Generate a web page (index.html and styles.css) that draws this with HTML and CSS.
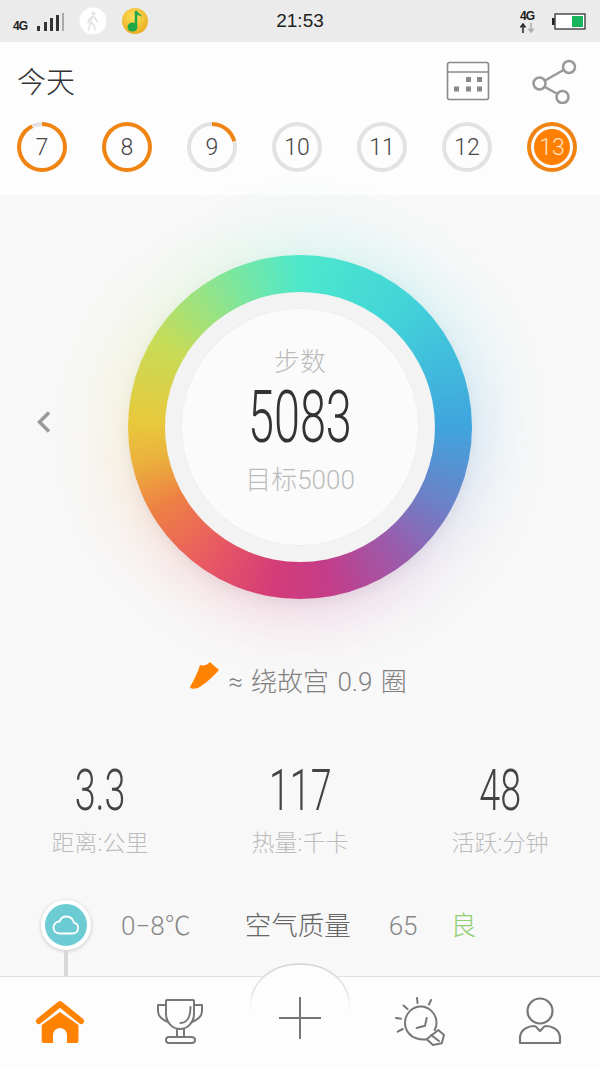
FILE: index.html
```html
<!DOCTYPE html>
<html lang="zh-CN">
<head>
  <meta charset="UTF-8">
  <title>今天</title>
  <link rel="stylesheet" href="styles.css">
</head>
<body>
  <div class="statusbar">
    <div class="status-left">
      <span class="net">4G</span>
      <svg class="signal" width="30" height="20" viewBox="0 0 30 20">
        <rect x="1" y="14" width="3" height="5" fill="#333"/>
        <rect x="8" y="10" width="3" height="9" fill="#333"/>
        <rect x="14" y="6" width="3" height="13" fill="#333"/>
        <rect x="20" y="3" width="3" height="16" fill="#333"/>
        <rect x="26" y="1" width="2" height="18" fill="#aaa"/>
      </svg>
      <svg class="app-walk" width="28" height="28" viewBox="0 0 28 28">
        <circle cx="14" cy="14" r="13.5" fill="#fff"/>
        <circle cx="14.5" cy="6.5" r="2" fill="#e4e4e4"/>
        <path d="M13 10l3 .5 2 4M13 10l-1.500 5 3.500 3 1 5M11.500 15l-2 8M13 10l-3 2.500-1 3" fill="none" stroke="#e4e4e4" stroke-width="1.800" stroke-linecap="round"/>
      </svg>
      <svg class="app-music" width="28" height="28" viewBox="0 0 28 28">
        <defs>
          <radialGradient id="qq" cx="45%" cy="35%" r="70%">
            <stop offset="0" stop-color="#ffe15a"/>
            <stop offset="1" stop-color="#e8a91c"/>
          </radialGradient>
        </defs>
        <circle cx="14" cy="14" r="13" fill="url(#qq)"/>
        <path d="M15 4v15" stroke="#1fa84a" stroke-width="2.500"/>
        <path d="M15 3c1 3 5 3 6 7-2-1.500-4-2-6-1.500z" fill="#1fa84a"/>
        <ellipse cx="11.500" cy="20" rx="5" ry="4.500" fill="#1fa84a"/>
      </svg>
    </div>
    <div class="clock">21:53</div>
    <div class="status-right">
      <div class="net-up">
        <span class="net">4G</span>
        <svg width="16" height="10" viewBox="0 0 16 10">
          <path d="M4 10V3M1.500 4.500L4 1l2.500 3.500" fill="none" stroke="#222" stroke-width="1.500"/>
          <path d="M12 0v7M9.500 5.500L12 9l2.500-3.500" fill="none" stroke="#aaa" stroke-width="1.500"/>
        </svg>
      </div>
      <svg class="battery" width="34" height="17" viewBox="0 0 34 17">
        <rect x="3" y="1" width="30" height="15" fill="#fff" stroke="#222" stroke-width="1.200"/>
        <rect x="0" y="5" width="2.500" height="7" fill="#222"/>
        <rect x="20" y="3" width="11" height="11" fill="#19b35b"/>
      </svg>
    </div>
  </div>

  <header class="top">
    <div class="top-row">
      <h1 class="today">今天</h1>
      <div class="top-icons">
        <svg width="44" height="40" viewBox="0 0 44 40">
          <rect x="1.500" y="1.500" width="41" height="37" rx="2" fill="none" stroke="#888" stroke-width="1.600"/>
          <path d="M1.500 11h41" stroke="#888" stroke-width="1.600"/>
          <g fill="#888">
            <rect x="20" y="16" width="5" height="5"/>
            <rect x="31" y="16" width="5" height="5"/>
            <rect x="8" y="25.500" width="5" height="5"/>
            <rect x="20" y="25.500" width="5" height="5"/>
            <rect x="31" y="25.500" width="5" height="5"/>
          </g>
        </svg>
        <svg width="46" height="46" viewBox="0 0 46 46">
          <g fill="none" stroke="#999" stroke-width="2.500">
            <circle cx="38" cy="9" r="6"/>
            <circle cx="8.500" cy="25.500" r="6"/>
            <circle cx="31.500" cy="39" r="6"/>
            <path d="M14 22.500l18.500-10.500M14 29l12.500 7"/>
          </g>
        </svg>
      </div>
    </div>
    <div class="days">
      <div class="day" style="--p: 93%"><span>7</span></div>
      <div class="day" style="--p: 100%"><span>8</span></div>
      <div class="day" style="--p: 21%"><span>9</span></div>
      <div class="day" style="--p: 0%"><span>10</span></div>
      <div class="day" style="--p: 0%"><span>11</span></div>
      <div class="day" style="--p: 0%"><span>12</span></div>
      <div class="day current" style="--p: 100%"><span>13</span></div>
    </div>
  </header>

  <main class="main">
    <section class="hero">
      <svg class="prev" width="16" height="24" viewBox="0 0 16 24">
        <path d="M13 2.500L3.500 12l9.500 9.500" fill="none" stroke="#999" stroke-width="3.500"/>
      </svg>
      <div class="dial">
        <div class="dial-glow"></div>
        <div class="dial-ring"></div>
        <div class="dial-hole">
          <div class="dial-face">
            <div class="dial-label">步数</div>
            <div class="dial-num"><span>5083</span></div>
            <div class="dial-goal">目标5000</div>
          </div>
        </div>
      </div>
      <div class="route">
        <svg width="32" height="30" viewBox="0 0 32 30">
          <path d="M2 27C6 20 10 12 12 5c3 1 6 1 10-3 3 3 7 6 9 8-5 6-14 14-21 18-4 1-8 1-8-1z" fill="#ff8200"/>
        </svg>
        <span class="route-text">≈ 绕故宫 0.9 圈</span>
      </div>
    </section>

    <section class="stats">
      <div class="stat">
        <div class="stat-num"><span>3.3</span></div>
        <div class="stat-label">距离:公里</div>
      </div>
      <div class="stat">
        <div class="stat-num"><span>117</span></div>
        <div class="stat-label">热量:千卡</div>
      </div>
      <div class="stat">
        <div class="stat-num"><span>48</span></div>
        <div class="stat-label">活跃:分钟</div>
      </div>
    </section>

    <section class="weather">
      <div class="pin">
        <svg width="28" height="20" viewBox="0 0 28 20">
          <path d="M7 18.500h14a5.500 5.500 0 0 0 1-10.800C21 4 18 1.500 14.500 1.500 11 1.500 8.500 3.500 7.500 6.500 4 6.500 1.500 9.200 1.500 12.500S4 18.500 7 18.500z" fill="none" stroke="#fff" stroke-width="1.800"/>
        </svg>
      </div>
      <div class="weather-text">
        <span class="temp">0−8℃</span>
        <span class="air">空气质量</span>
        <span class="aqi">65</span>
        <span class="aqi-level">良</span>
      </div>
    </section>
  </main>

  <nav class="tabs">
    <svg class="hump" width="104" height="46" viewBox="0 0 104 46">
      <defs>
        <linearGradient id="humpline" x1="0" y1="0" x2="0" y2="1">
          <stop offset="0" stop-color="#d4d4d4"/>
          <stop offset="0.6" stop-color="#e2e2e2"/>
          <stop offset="1" stop-color="#fbfbfb"/>
        </linearGradient>
      </defs>
      <path d="M2 46C2 18 24 1 52 1s50 17 50 45z" fill="#fdfdfd"/>
      <path d="M2 46C2 18 24 1 52 1s50 17 50 45" fill="none" stroke="url(#humpline)" stroke-width="1.500"/>
    </svg>
    <div class="tab">
      <svg width="50" height="50" viewBox="0 0 50 50">
        <path d="M4 25L25 8l21 17" fill="none" stroke="#ff8200" stroke-width="6" stroke-linecap="round" stroke-linejoin="round"/>
        <path d="M25 16l18.500 13v16a2 2 0 0 1-2 2H32v-8a7 7 0 0 0-14 0v8H8.700a2 2 0 0 1-2-2V29z" fill="#ff8200"/>
      </svg>
    </div>
    <div class="tab">
      <svg width="50" height="50" viewBox="0 0 50 50">
        <g fill="none" stroke="#777" stroke-width="2" stroke-linejoin="round" stroke-linecap="round">
          <path d="M12 4h26q1 0 1 1v13c0 9-7 15-14 15s-14-6-14-15V5q0-1 1-1z"/>
          <path d="M11 9H3v6c0 5 5 9 10 11M39 9h8v6c0 5-5 9-10 11"/>
          <path d="M35.500 11c0 9-3 16-10 16"/>
          <path d="M22 33v8M29 33v8"/>
          <path d="M14 41h22q4 0 4 3t-3 3H14q-3 0-3-3t3-3z"/>
        </g>
      </svg>
    </div>
    <div class="tab">
      <svg class="plus" width="50" height="50" viewBox="0 0 50 50">
        <path d="M25 4v42M4 25h42" stroke="#777" stroke-width="2"/>
      </svg>
    </div>
    <div class="tab">
      <svg width="50" height="50" viewBox="0 0 50 50">
        <g fill="none" stroke="#777" stroke-width="2" stroke-linejoin="round" stroke-linecap="round">
          <path d="M31.700 43.300C28 44 25 43.500 22 42.500c-7-2-12-8-12-15.800C10 18 17 10.500 25.700 10.500S41.500 18 41.500 26.700c0 3-.8 5.500-1.800 7.300"/>
          <path d="M43.300 34l5.700 5-2.300 8.300-8.700 1.700-6.300-5.700z"/>
          <path d="M36 39l8 6"/>
          <path d="M31.700 22L30 29.700 21.700 32"/>
          <path d="M22 2l.5 5M36 4l-2 4.500M8.500 9.500l4 3.500M1 22l5 .7M2.700 35.700l5-2.700"/>
        </g>
      </svg>
    </div>
    <div class="tab">
      <svg width="50" height="50" viewBox="0 0 50 50">
        <g fill="none" stroke="#777" stroke-width="2.200" stroke-linejoin="round">
          <circle cx="25" cy="15" r="12.500"/>
          <path d="M5 47v-5c0-9 9-12 14-12 3 0 4 4 6 5 2-1 3-5 6-5 5 0 14 3 14 12v5z"/>
        </g>
      </svg>
    </div>
  </nav>
</body>
</html>
```

FILE: styles.css
```css
* {
  box-sizing: border-box;
}

html, body {
  margin: 0;
  padding: 0;
}

body {
  width: 600px;
  height: 1067px;
  overflow: hidden;
  display: flex;
  flex-direction: column;
  background-color: #f8f8f8;
  font-family: Roboto, "Noto Sans CJK SC", sans-serif;
  font-weight: 300;
}

svg {
  display: block;
}

/* status bar */
.statusbar {
  height: 42px;
  background-color: #ebebeb;
  display: grid;
  grid-template-columns: 1fr auto 1fr;
  align-items: center;
  padding: 0 13px;
}

.status-left {
  display: flex;
  align-items: center;
}

.net {
  font-family: "Liberation Sans", sans-serif;
  font-size: 12px;
  font-weight: 700;
  color: #222;
  letter-spacing: -1px;
}

.status-left .net {
  margin-top: 9px;
  width: 18px;
}

.signal {
  margin: 2px 0 0 5px;
}

.app-walk {
  margin-left: 13px;
}

.app-music {
  margin-left: 14px;
}

.clock {
  font-family: "Liberation Sans", sans-serif;
  font-size: 19px;
  color: #222;
}

.status-right {
  display: flex;
  justify-content: flex-end;
  align-items: center;
  padding-right: 1px;
}

.net-up {
  display: flex;
  flex-direction: column;
  align-items: center;
  margin-right: 17px;
  line-height: 13px;
}

/* header with days */
.top {
  height: 153px;
  background-color: #fdfdfd;
  padding: 16px 23px 0 17px;
}

.top-row {
  height: 46px;
  display: flex;
  justify-content: space-between;
  align-items: center;
}

.today {
  margin: 4px 0 0;
  font-size: 29px;
  font-weight: 300;
  color: #333;
  line-height: 46px;
}

.top-icons {
  display: flex;
  align-items: center;
  gap: 41px;
}

.days {
  display: flex;
  justify-content: space-between;
  margin-top: 18px;
}

.day {
  width: 50px;
  height: 50px;
  border-radius: 50%;
  padding: 4px;
  background: conic-gradient(#ef8412 var(--p), #e2e2e2 0);
}

.day span {
  display: flex;
  align-items: center;
  justify-content: center;
  width: 100%;
  height: 100%;
  border-radius: 50%;
  background-color: #fdfdfd;
  color: #444;
  font-size: 23px;
}

.day.current span {
  background-color: #ff8000;
  color: #ffe3c4;
  box-shadow: 0 0 0 3px #fdfdfd inset;
  background-clip: content-box;
  padding: 3px;
}

/* main area */
.main {
  flex: 1;
  background-color: #f8f8f8;
}

.hero {
  position: relative;
  padding-top: 60px;
}

.prev {
  position: absolute;
  left: 36px;
  top: 215px;
}

.dial {
  position: relative;
  width: 344px;
  height: 344px;
  margin: 0 auto;
}

.dial-glow,
.dial-ring {
  position: absolute;
  inset: 0;
  border-radius: 50%;
  background: conic-gradient(#4de8cc 0deg, #42d4d8 40deg, #41bcdc 65deg, #40a4de 90deg, #6a82c8 118deg, #9a5cac 142deg, #c43c88 170deg, #d43c78 190deg, #e85a62 215deg, #ee8044 240deg, #ebb23c 258deg, #e8c93c 272deg, #c6dc58 302deg, #7ee69c 335deg, #4de8cc 360deg);
}

.dial-glow {
  filter: blur(30px);
  opacity: 0.22;
  transform: scale(1.08);
}

.dial-ring {
  box-shadow: 0 5px 12px rgba(120, 120, 140, 0.1);
}

.dial-hole {
  position: absolute;
  inset: 37px;
  border-radius: 50%;
  background-color: #f3f3f3;
  padding: 17px;
}

.dial-face {
  width: 100%;
  height: 100%;
  border-radius: 50%;
  background-color: #fbfbfb;
  box-shadow: 0 0 0 1px #efefef;
  display: flex;
  flex-direction: column;
  align-items: center;
  padding-top: 35px;
}

.dial-label {
  font-size: 26px;
  line-height: 36px;
  color: #bbb;
}

.dial-num {
  font-size: 72px;
  line-height: 76px;
  color: #333;
}

.dial-num span,
.stat-num span {
  display: inline-block;
  transform: scaleX(0.65);
}

.dial-goal {
  font-size: 26px;
  line-height: 36px;
  margin-top: 6px;
  color: #bbb;
}

.route {
  display: flex;
  align-items: center;
  justify-content: center;
  gap: 8px;
  margin-top: 67px;
  height: 32px;
  padding-right: 5px;
}

.route svg {
  margin-top: -15px;
}

.route-text {
  font-size: 26px;
  color: #808080;
  line-height: 32px;
  word-spacing: 2px;
}

.stats {
  display: grid;
  grid-template-columns: repeat(3, 1fr);
  margin-top: 58px;
}

.stat {
  text-align: center;
}

.stat-num {
  font-size: 58px;
  line-height: 68px;
  color: #444;
}

.stat-label {
  font-size: 23px;
  line-height: 30px;
  margin-top: 5px;
  color: #bcbcbc;
}

.weather {
  display: flex;
  align-items: center;
  height: 50px;
  margin-top: 41px;
  padding-left: 41px;
  font-size: 26px;
  color: #888;
}

.weather-text {
  display: flex;
  align-items: baseline;
  padding-bottom: 4px;
}

.pin {
  position: relative;
  width: 50px;
  height: 50px;
  border-radius: 50%;
  border: 4px solid #fff;
  background-color: #6ccbd3;
  box-shadow: 0 1px 4px rgba(0, 0, 0, 0.2);
  display: flex;
  align-items: center;
  justify-content: center;
}

.pin::after {
  content: "";
  position: absolute;
  left: 19px;
  top: 46px;
  width: 4px;
  height: 40px;
  background-color: #d8d8d8;
}

.temp {
  margin-left: 30px;
}

.air {
  margin-left: 54px;
  font-size: 26.5px;
  color: #666;
}

.aqi {
  margin-left: 38px;
}

.aqi-level {
  margin-left: 33px;
  color: #8fcf6f;
}

/* bottom tabs */
.tabs {
  position: relative;
  height: 91px;
  background-color: #fdfdfd;
  border-top: 1px solid #dedede;
  display: grid;
  grid-template-columns: repeat(5, 1fr);
  padding-top: 19px;
}

.tab {
  display: flex;
  justify-content: center;
}

.tab .plus {
  margin-top: -3px;
  position: relative;
}

.hump {
  position: absolute;
  left: 248px;
  top: -14px;
}
```
